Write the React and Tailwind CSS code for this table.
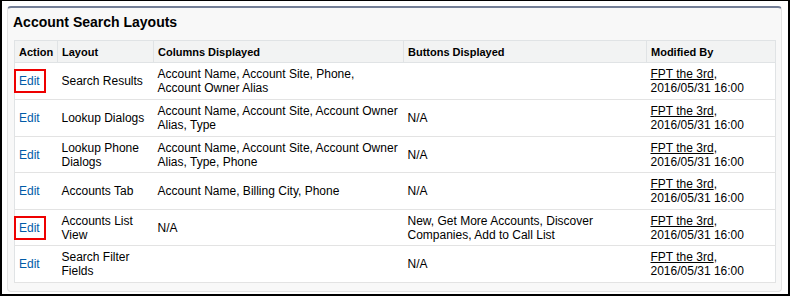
const rows = [
  { layout: "Search Results", columns: "Account Name, Account Site, Phone, Account Owner Alias", buttons: "", marked: true, h: "h-[37px]" },
  { layout: "Lookup Dialogs", columns: "Account Name, Account Site, Account Owner Alias, Type", buttons: "N/A", h: "h-[37px]" },
  { layout: "Lookup Phone Dialogs", columns: "Account Name, Account Site, Account Owner Alias, Type, Phone", buttons: "N/A", h: "h-[36px]" },
  { layout: "Accounts Tab", columns: "Account Name, Billing City, Phone", buttons: "N/A", h: "h-[37px]" },
  { layout: "Accounts List View", columns: "N/A", buttons: "New, Get More Accounts, Discover Companies, Add to Call List", marked: true, h: "h-[36px]" },
  { layout: "Search Filter Fields", columns: "", buttons: "N/A", h: "h-[37px]" },
];

const headers = ["Action", "Layout", "Columns Displayed", "Buttons Displayed", "Modified By"];

export default function App() {
  return (
    <div
      className="w-[790px] h-[296px] bg-white border-black border-t-[1px] border-l-2 border-r-2 border-b-2 overflow-hidden"
      style={{ fontFamily: '"Liberation Sans", Arial, sans-serif' }}
    >
      <div className="mt-[5px] ml-[5px] w-[775px] h-[286px] bg-[#f8f8f8] border border-[#e3e3e3] border-t-2 border-t-[#737e96] rounded-[4px]">
        <h2 className="pt-[5px] pl-[5px] text-[14px] leading-[18px] font-bold text-black">
          Account Search Layouts
        </h2>

        <table className="mt-[9px] ml-[6px] w-[761px] table-fixed border-collapse bg-white border border-[#e0e3e5] text-[12px] leading-[14px] text-black">
          <colgroup>
            <col className="w-[43px]" />
            <col className="w-[96px]" />
            <col className="w-[250px]" />
            <col className="w-[243px]" />
            <col className="w-[129px]" />
          </colgroup>
          <thead>
            <tr className="bg-[#f2f3f3] h-[22px]">
              {headers.map((h) => (
                <th
                  key={h}
                  className="px-[4px] text-left text-[11px] font-bold border border-[#e0e3e5] align-middle"
                >
                  {h}
                </th>
              ))}
            </tr>
          </thead>
          <tbody>
            {rows.map((row) => (
              <tr key={row.layout} className={`border-b border-[#e3e3e3] ${row.h}`}>
                <td className="px-[4px] py-[3px] align-middle">
                  <span className="relative text-[#015ba7]">
                    Edit
                    {row.marked && (
                      <span className="absolute -top-[5px] -bottom-[5px] -left-[5px] -right-[6px] border-2 border-[#ee0000]" />
                    )}
                  </span>
                </td>
                <td className="px-[4px] py-[3px] align-middle">{row.layout}</td>
                <td className="px-[4px] py-[3px] align-middle">{row.columns}</td>
                <td className="px-[4px] py-[3px] align-middle">{row.buttons}</td>
                <td className="px-[4px] py-[3px] align-middle">
                  <span className="underline">FPT the 3rd</span>,
                  <br />
                  2016/05/31 16:00
                </td>
              </tr>
            ))}
          </tbody>
        </table>
      </div>
    </div>
  );
}
